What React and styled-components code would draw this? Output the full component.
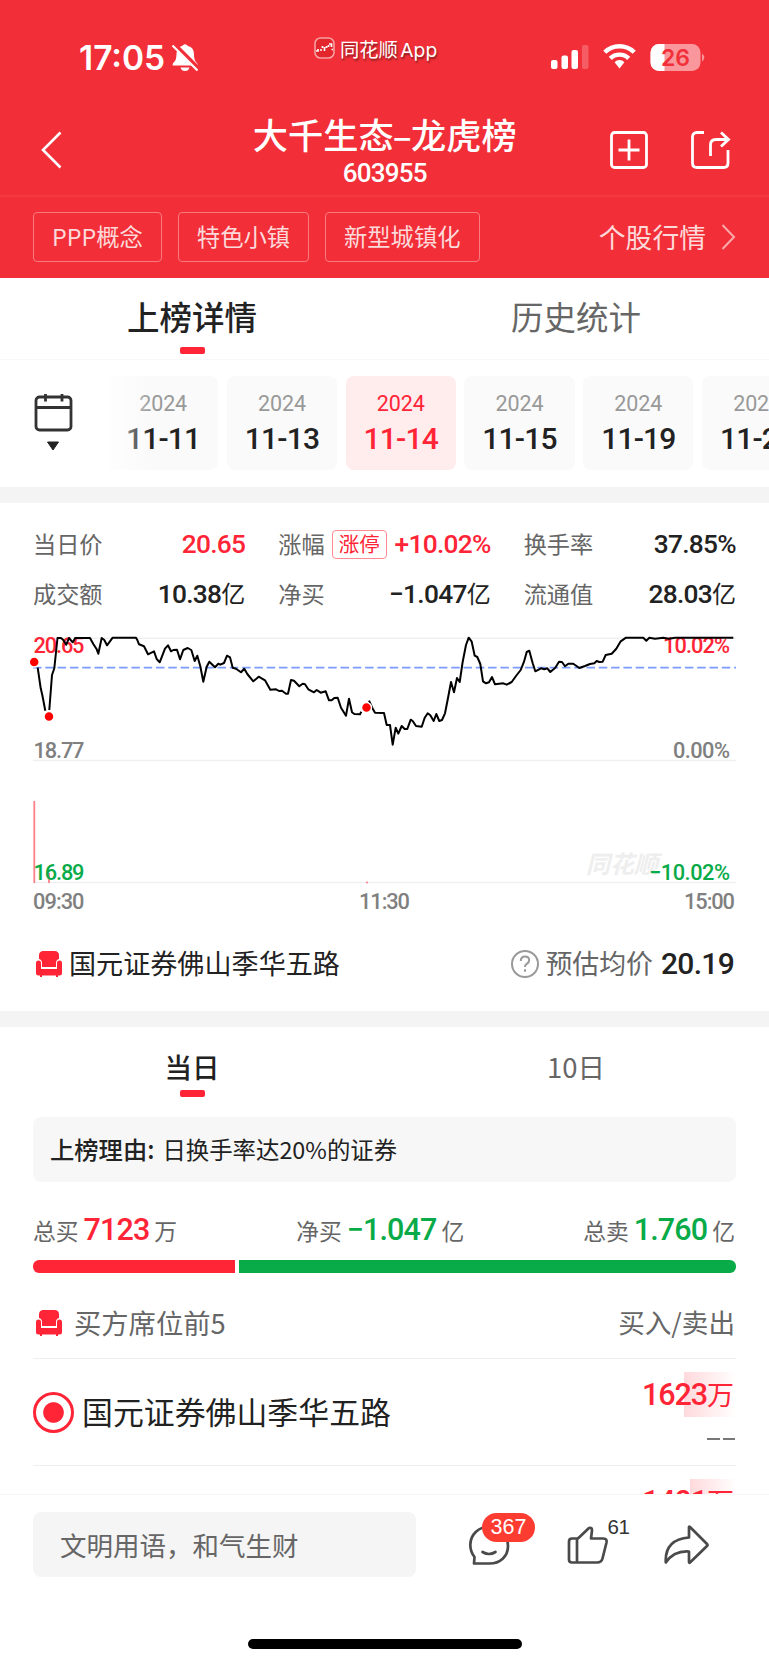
import React from 'react'
import styled, { createGlobalStyle } from 'styled-components'

const days = [
  { year: '2024', day: '11-11' },
  { year: '2024', day: '11-13' },
  { year: '2024', day: '11-14', active: true },
  { year: '2024', day: '11-15' },
  { year: '2024', day: '11-19' },
  { year: '2024', day: '11-20' },
]

const stats = [
  { label: '当日价', value: '20.65', red: true },
  { label: '涨幅', badge: '涨停', value: '+10.02%', red: true },
  { label: '换手率', value: '37.85%' },
  { label: '成交额', value: '10.38', unit: '亿' },
  { label: '净买', value: '−1.047', unit: '亿' },
  { label: '流通值', value: '28.03', unit: '亿' },
]

// price line, split where the trade dots sit on it
const priceLines = [
  '37.7,37.7 40.7,58.3 42.3,65 45.3,80.7',
  '49.3,80 52,45 54.3,38.3 57.5,8 61,8 63.3,10 66.3,14.7 69,8 72.7,12.3 75.3,8 90,8 93.3,14 96.7,19.3 98.3,23.7 101.7,8 104.3,10 107,15.3 112.7,7.7 136,7.7 137.3,10 139,14.3 144,16.3 148,24.3 154,21.3 156.7,29 159.7,32.3 165,18.7 168,15.3 171,21.3 173.3,20 177,19.7 180,29.3 183.3,20 187.7,18 191.3,20 194.7,31 197.3,25.7 200.3,36.3 203.3,51.7 206.7,36.7 209.3,31.7 215,37.3 218.3,33.7 220.3,34.7 224,33 227,25.7 230,27.3 232.7,37.7 236,38.7 241,42.3 244.3,38.7 247.3,44 253.3,51.3 258.7,46.7 265,50.3 270.3,59.7 276,59.3 279,61 282,60.7 286,63.7 288,63.7 291,50 294,50.7 299.3,56.3 302.7,53.7 305,54.3 308.3,59.3 314,62.3 316.7,60 320.7,62.7 325.7,61.3 329,70.3 331.7,70.3 334.3,68 337.7,67.7 341,77.7 346,85.7 349,68.7 352,82.3 354.3,84 360,84.3 361.3,81.7',
  '369,70.7 373,79.3 375,82.7 384,83 386.7,95 390,95 392.7,114.7 395.7,97.7 398.3,103.7 401.7,96 404.7,99 407.3,99 410.7,89.7 412.7,91 416,96 421.7,96.7 424.7,87.7 427.7,83.3 430.3,85.3 433.7,91 436.3,84 439.3,91 442,90 445,83.3 448,68 451,52 454,62.3 457,48 459.7,52 462.7,31.7 466,15 468.7,7.7 471.7,11.7 474.7,25.7 477.3,27 480.3,34 483,51.3 486,53.3 489,52.3 492,47 495,54.3 503.3,53.3 506.7,54.7 511.7,52 516,46 520.7,40 524,31.7 526.7,22 529.3,20.7 532.7,33.3 535.3,41.3 541,38.3 544.3,39.3 547.3,38.3 550.3,42 555.3,37.7 559,31.7 562,32 565,36.3 568.3,33.7 573.3,33.7 579.3,38 585,36 590,34 594.3,33.3 596.7,31 599.3,32 602.7,31.7 605.7,25 611.7,23.7 616.3,18.7 620.7,11.3 626,7.7 643.3,7.7 646.3,10.7 649.3,7.7 655,8.7 663.3,7.7 669,8.7 675,7.7 733.3,7.7',
]

const Chair = () => (
  <svg width="28" height="28" viewBox="0 0 28 28" fill="#ff2436">
    <path d="M4 9V5.5Q4 1 8.500 1h11Q24 1 24 5.500V9q-3 .8-3 4v4H7v-4q0-3.200-3-4z" />
    <path d="M3.500 10.500Q1 10.500 1 13v10q0 2.500 2.500 2.500H5V27h2v-1.500h14V27h2v-1.500h1.500Q27 25.500 27 23V13q0-2.500-2.500-2.500T22 13v6H6v-6q0-2.500-2.500-2.500z" />
  </svg>
)

const StatusIcons = () => (
  <svg width="156" height="30" viewBox="0 0 156 30">
    <g fill="#fff">
      <rect x="1" y="17" width="6.500" height="9" rx="2" />
      <rect x="11.500" y="12.500" width="6.500" height="13.500" rx="2" />
      <rect x="21.500" y="7" width="6.500" height="19" rx="2" />
      <rect x="32" y="2" width="6.500" height="24" rx="2" opacity=".22" />
      <path d="M64.600 19.200a6.600 6.600 0 0 1 9.800 0l-4.900 6.300z" />
    </g>
    <g fill="none" stroke="#fff" strokeWidth="4.400">
      <path d="M54.800 9.300a21 21 0 0 1 29.400 0" />
      <path d="M60.300 15.400a13 13 0 0 1 18.400 0" />
    </g>
    <rect x="100.500" y="1" width="50" height="27" rx="8.500" fill="#fff" opacity=".5" />
    <path d="M114.500 1H109a8.500 8.500 0 0 0-8.500 8.500v10a8.500 8.500 0 0 0 8.500 8.500h5.500z" fill="#fff" />
    <path d="M152 10.500q4.500 4 0 8z" fill="#fff" opacity=".5" />
    <text x="125.500" y="22.500" textAnchor="middle" fill="#f22f38" fontFamily="Inter" fontWeight="600" fontSize="23">26</text>
  </svg>
)

const App = () => {
  return (
    <Page>
      <Global />
      <Header>
        <StatusBar>
          <Clock>17:05</Clock>
          <Bell width="28" height="29" viewBox="0 0 28 29">
            <path d="M1.500 22.500q0-2.500 2-4 2-2 2-8Q6 3.500 11 3q3-3.500 6 0 6 1 6 8.500 0 5.500 2 7.500t2 3.500zM9.500 24.500h9q-1 3.500-4.500 3.500t-4.500-3.500z" fill="#fff" />
            <path d="M4 2.500 26 24.500" stroke="#f22f38" strokeWidth="5" />
            <path d="M1.500 2.500 26.500 27.500" stroke="#fff" strokeWidth="2.200" />
          </Bell>
          <Brand>
            <svg width="21" height="22" viewBox="0 0 21 22">
              <rect x="1" y="1" width="19" height="20" rx="5.500" fill="#e3262b" stroke="#f8a0a2" strokeWidth="1.600" />
              <path d="M2 14h2v-2M6 13h2M8.500 9v2M10.500 10v4M12.500 11V9M14.500 10V8M15 7h2.500v3M17.500 12.500H19" stroke="#fff" strokeWidth="1.700" fill="none" />
            </svg>
            同花顺 App
          </Brand>
          <StatusIcons />
        </StatusBar>
        <TitleBar>
          <svg width="22" height="38" viewBox="0 0 22 38" fill="none" stroke="#fff" strokeWidth="2.600">
            <path d="M20.500 1.500 3 19l17.500 17.500" />
          </svg>
          <TitleBox>
            <Title>大千生态<Dash>–</Dash>龙虎榜</Title>
            <Code>603955</Code>
          </TitleBox>
          <Actions>
            <svg width="38" height="38" viewBox="0 0 38 38" fill="none" stroke="#fff" strokeWidth="2.800">
              <rect x="1.500" y="1.500" width="35" height="35" rx="3" />
              <path d="M8.500 19h21M19 8.500v21" />
            </svg>
            <svg width="40" height="38" viewBox="0 0 40 38" fill="none" stroke="#fff" strokeWidth="2.800">
              <path d="M13 1.500H6Q1.500 1.500 1.500 6v26q0 4.500 4.500 4.500h26.500q4.500 0 4.500-4.500V19" />
              <path d="M19.500 25V14q0-5.500 5.500-5.500h11" />
              <path d="m30 1.500 7.500 7L30 15.500" />
            </svg>
          </Actions>
        </TitleBar>
        <TagBar>
          <Tag>PPP概念</Tag>
          <Tag>特色小镇</Tag>
          <Tag>新型城镇化</Tag>
          <Quote>
            个股行情
            <svg width="15" height="26" viewBox="0 0 15 26" fill="none" stroke="#f9a9ac" strokeWidth="2">
              <path d="M1.500 1 13 13 1.500 25" />
            </svg>
          </Quote>
        </TagBar>
      </Header>

      <Tabs $main>
        <Tab $main $on>上榜详情</Tab>
        <Tab $main>历史统计</Tab>
      </Tabs>

      <DateBar>
        <Calendar>
          <svg width="40" height="60" viewBox="0 0 40 60" fill="none" stroke="#333" strokeWidth="2.800">
            <rect x="3" y="5" width="35" height="33" rx="3.500" />
            <path d="M3 15.500h35M12.500 2v7.500M29 2v7.500" />
            <path d="M14.500 50h11L20 58z" fill="#222" stroke="#222" strokeWidth="1" />
          </svg>
        </Calendar>
        <DayList>
          {days.map((d) => (
            <Day key={d.day} $on={d.active}>
              <Year $on={d.active}>{d.year}</Year>
              <span>{d.day}</span>
            </Day>
          ))}
          <Fade />
        </DayList>
      </DateBar>
      <Gap />

      <Stats>
        {stats.map((s) => (
          <Stat key={s.label}>
            <StatLabel>{s.label}</StatLabel>
            {s.badge && <LimitBadge>{s.badge}</LimitBadge>}
            <StatValue $red={s.red}>{s.value}{s.unit && <small>{s.unit}</small>}</StatValue>
          </Stat>
        ))}
      </Stats>

      <Chart width="769" height="290" viewBox="0 0 769 290">
        <g stroke="#f0f0f0" strokeWidth="1.500">
          <path d="M33 8.200h703M33 130.500h703M33 252.500h703" />
        </g>
        <text className="mark" x="586" y="243">同花顺</text>
        <path d="M34.300 171v82M49 243v10" stroke="#ff7f88" strokeWidth="1.800" />
        <path d="M366 252.500h2" stroke="#ff7f88" strokeWidth="1.500" />
        <path d="M33 37.600h703" stroke="#7d9cff" strokeWidth="1.800" strokeDasharray="8.500 3.800" />
        <g fill="#ff2436">
          <text x="33.500" y="22.800" textLength="51">20.65</text>
          <text x="663" y="22.800" textLength="67">10.02%</text>
        </g>
        <g fill="#808080">
          <text x="33.500" y="128" textLength="51">18.77</text>
          <text x="673" y="128" textLength="57">0.00%</text>
          <text x="33" y="279" textLength="51.500">09:30</text>
          <text x="359" y="279" textLength="51">11:30</text>
          <text x="684" y="279" textLength="51">15:00</text>
        </g>
        <g fill="#09ab49">
          <text x="33.500" y="250" textLength="51">16.89</text>
          <text x="649" y="250" textLength="81">−10.02%</text>
        </g>
        {priceLines.map((p) => (
          <polyline key={p} points={p} fill="none" stroke="#000" strokeWidth="2" strokeLinejoin="round" />
        ))}
        <g fill="#f00" stroke="#fff" strokeWidth="1.500">
          <circle cx="34.200" cy="32" r="5" />
          <circle cx="49" cy="86.500" r="5" />
          <circle cx="366.500" cy="77.500" r="5" />
        </g>
      </Chart>

      <Broker>
        <Chair />
        <BrokerName>国元证券佛山季华五路</BrokerName>
        <svg width="30" height="30" viewBox="0 0 30 30" fill="none" stroke="#999" strokeWidth="2">
          <circle cx="15" cy="15" r="13" />
          <path d="M10.800 12q0-4.500 4.200-4.500t4.200 3.800q0 2-2.200 3.400-2 1.300-2 3.300M15 20.300v2.400" />
        </svg>
        <AvgLabel>预估均价</AvgLabel>
        <AvgValue>20.19</AvgValue>
      </Broker>
      <Gap />

      <Tabs>
        <Tab $on>当日</Tab>
        <Tab>10日</Tab>
      </Tabs>
      <Reason><b>上榜理由:</b>日换手率达20%的证券</Reason>
      <Totals>
        <Total>总买<Num $color="#ff2436">7123</Num>万</Total>
        <Total>净买<Num>−1.047</Num>亿</Total>
        <Total>总卖<Num>1.760</Num>亿</Total>
      </Totals>
      <Ratio>
        <Buy />
        <Sell />
      </Ratio>

      <SeatHead>
        <Chair />
        <SeatTitle>买方席位前5</SeatTitle>
        <SeatSides>买入/卖出</SeatSides>
      </SeatHead>
      <SeatList>
        <Seat>
          <Radio />
          <SeatName>国元证券佛山季华五路</SeatName>
          <Amounts>
            <Amount $from={42}>1623<small>万</small></Amount>
            <Empty><i /><i /></Empty>
          </Amounts>
        </Seat>
        <Seat>
          <Amounts>
            <Amount $from={48}>1401<small>万</small></Amount>
          </Amounts>
        </Seat>
      </SeatList>

      <Footer>
        <Comment>文明用语，和气生财</Comment>
        <IconBox>
          <svg width="44" height="44" viewBox="0 0 44 44" fill="none" stroke="#4a4a4a" strokeWidth="2.700" strokeLinejoin="round" strokeLinecap="round">
            <path d="M6 40.500h15.500C32 40.500 40 33.500 40 23S32 3.500 21.500 3.500 2.300 11.500 2.300 22q0 6.500 4.200 12z" />
            <path d="M14.500 29q6.500 4 13 0" />
          </svg>
          <Badge>367</Badge>
        </IconBox>
        <IconBox>
          <svg width="44" height="44" viewBox="0 0 44 44" fill="none" stroke="#4a4a4a" strokeWidth="2.700" strokeLinejoin="round">
            <path d="M11 15.500H6q-3 0-3 3v18q0 3 3 3h25q4.500 0 5.500-4l4-16q.8-4-3-4H25l1-8q0-3.500-3-2.500L12.500 15q-.8.500-1.500.5v24" />
          </svg>
          <Likes>61</Likes>
        </IconBox>
        <IconBox>
          <svg width="46" height="44" viewBox="0 0 46 44" fill="none" stroke="#4a4a4a" strokeWidth="2.700" strokeLinejoin="round">
            <path d="M26 4.500q-.2-1.500 1-.5l17 17q1 1 0 2L27 39.500q-1 .8-1-.7V28.500Q11 27.500 2.800 39.500 1.500 16.500 26 14.500z" />
          </svg>
        </IconBox>
      </Footer>
      <HomeBar />
    </Page>
  )
}

export default App

const Global = createGlobalStyle`
  body {
    margin: 0;
    background: #fff;
  }
  * {
    box-sizing: border-box;
  }
  svg {
    flex: none;
    display: block;
  }
`

const Page = styled.div`
  width: 769px;
  height: 1665px;
  overflow: hidden;
  display: flex;
  flex-direction: column;
  color: #222;
  background: #fff;
  font-family: Roboto, "Noto Sans CJK SC", sans-serif;
  white-space: nowrap;
`

const Header = styled.div`
  height: 278px;
  flex: none;
  background: #f22f38;
  color: #fff;
`

const StatusBar = styled.div`
  height: 104px;
  padding: 43px 0 0 79px;
  display: flex;
  align-items: flex-start;
`

const Clock = styled.div`
  width: 92px;
  font: 600 33.500px/30px Inter, sans-serif;
  letter-spacing: 0;
`

const Bell = styled.svg`
  margin-right: 115px;
`

const Brand = styled.div`
  display: flex;
  gap: 5px;
  width: 236px;
  height: 22px;
  margin-top: -6px;
  font-size: 19.300px;
  font-family: Inter, "Noto Sans CJK SC", sans-serif;
  line-height: 26px;
  word-spacing: -3px;
  text-shadow: 1px 2px 2px rgba(0, 0, 0, 0.45);
`

const TitleBar = styled.div`
  height: 93px;
  padding: 0 38px 0 40px;
  display: flex;
  justify-content: space-between;
  align-items: center;
  border-bottom: 2px solid #f23940;
`

const TitleBox = styled.div`
  display: flex;
  flex-direction: column;
  align-items: center;
  padding: 4px 0 0 98px;
`

const Title = styled.div`
  display: flex;
  font-family: "Noto Sans CJK SC", sans-serif;
  font-size: 35.200px;
  font-weight: 500;
  line-height: 40px;
`

const Dash = styled.span`
  width: 17.500px;
  display: flex;
  justify-content: center;
`

const Code = styled.div`
  margin-top: 3px;
  font-size: 26px;
  font-weight: 500;
  line-height: 33px;
  letter-spacing: -0.800px;
`

const Actions = styled.div`
  display: flex;
  gap: 43.500px;
`

const TagBar = styled.div`
  height: 79px;
  padding: 0 33px;
  display: flex;
  align-items: center;
`

const Tag = styled.div`
  height: 50px;
  padding: 0 18px;
  margin-right: 16px;
  border: 1.500px solid #f77a80;
  border-radius: 4px;
  color: #fdd9da;
  font: 23.300px/47px "Noto Sans CJK SC", sans-serif;
`

const Quote = styled.div`
  margin-left: auto;
  display: flex;
  align-items: center;
  gap: 15px;
  color: #fdd9da;
  font: 26.800px/40px "Noto Sans CJK SC", sans-serif;
`

const Tabs = styled.div`
  flex: none;
  display: flex;
  height: ${(p) => (p.$main ? 82 : 90)}px;
  padding-right: 1px;
  border-bottom: ${(p) => (p.$main ? '1px solid #f8f8f8' : 'none')};
`

const Tab = styled.div`
  flex: 1;
  display: flex;
  flex-direction: column;
  align-items: center;
  padding-top: ${(p) => (p.$main ? 17 : 18)}px;
  font-family: "Noto Sans CJK SC", sans-serif;
  font-size: ${(p) => (p.$main ? 32.500 : 27.500)}px;
  line-height: 42px;
  font-weight: ${(p) => (p.$on ? 500 : 400)};
  color: ${(p) => (p.$on ? '#222' : '#666')};

  &::after {
    content: '';
    width: 25px;
    height: 6.500px;
    margin-top: ${(p) => (p.$main ? 10 : 3)}px;
    border-radius: 2px;
    background: ${(p) => (p.$on ? '#ff2436' : 'transparent')};
  }
`

const DateBar = styled.div`
  flex: none;
  height: 127px;
  display: flex;
  padding-top: 16px;
`

const Calendar = styled.div`
  width: 108px;
  padding: 16px 0 0 33px;
  flex: none;
`

const DayList = styled.div`
  position: relative;
  flex: 1;
  display: flex;
  gap: 8.500px;
  overflow: hidden;
`

const Day = styled.div`
  flex: none;
  width: 110.300px;
  height: 94px;
  padding-top: 11px;
  border-radius: 8px;
  display: flex;
  flex-direction: column;
  align-items: center;
  background: ${(p) => (p.$on ? '#ffedee' : '#fafafa')};
  color: ${(p) => (p.$on ? '#ff2436' : '#222')};
  font-size: 30px;
  line-height: 38px;
  font-weight: 500;
  letter-spacing: -0.800px;
`

const Year = styled.div`
  color: ${(p) => (p.$on ? '#ff2436' : '#999')};
  font-size: 21.500px;
  line-height: 33px;
  font-weight: 400;
  letter-spacing: -0.100px;
`

const Fade = styled.div`
  position: absolute;
  left: 0;
  top: 0;
  width: 44px;
  height: 94px;
  background: linear-gradient(90deg, rgba(255, 255, 255, 0.8), rgba(255, 255, 255, 0));
`

const Gap = styled.div`
  flex: none;
  height: 16px;
  background: #f4f4f4;
`

const Stats = styled.div`
  flex: none;
  height: 127px;
  padding: 16px 33px 0 33px;
  display: grid;
  grid-template-columns: repeat(3, 1fr);
  grid-auto-rows: 50px;
  column-gap: 33px;
`

const Stat = styled.div`
  display: flex;
  align-items: center;
`

const StatLabel = styled.div`
  padding-bottom: 2px;
  color: #666;
  font: 23.200px/30px "Noto Sans CJK SC", sans-serif;
`

const LimitBadge = styled.div`
  margin-left: 7px;
  height: 29px;
  padding: 0 6px;
  border: 1.500px solid #ff8a93;
  border-radius: 4px;
  color: #ff2436;
  font: 20.500px/25px "Noto Sans CJK SC", sans-serif;
`

const StatValue = styled.div`
  margin-left: auto;
  color: ${(p) => (p.$red ? '#ff2436' : '#222')};
  font-size: 26.300px;
  line-height: 30px;
  font-weight: 500;
  letter-spacing: -0.700px;

  small {
    font-size: 24px;
    font-weight: 400;
    letter-spacing: 0;
  }
`

const Chart = styled.svg`
  font-size: 21.800px;
  font-weight: 500;

  .mark {
    fill: #eee;
    font-size: 24px;
    font-weight: 700;
    font-style: italic;
  }
`

const Broker = styled.div`
  flex: none;
  height: 91px;
  padding: 0 35px 4px 35px;
  display: flex;
  align-items: center;
`

const BrokerName = styled.div`
  flex: 1;
  margin-left: 6px;
  padding-bottom: 1px;
  font: 27.100px/40px "Noto Sans CJK SC", sans-serif;
`

const AvgLabel = styled.div`
  margin: 0 8px 0 5px;
  padding-bottom: 1px;
  color: #666;
  font: 26.900px/40px "Noto Sans CJK SC", sans-serif;
`

const AvgValue = styled.div`
  font-size: 30px;
  font-weight: 500;
  letter-spacing: -0.700px;
`

const Reason = styled.div`
  flex: none;
  height: 65px;
  margin: 0 33px;
  padding-left: 17px;
  border-radius: 8px;
  background: #f7f7f7;
  font: 23.400px/64px "Noto Sans CJK SC", sans-serif;

  b {
    margin-right: 8px;
    font-size: 24.300px;
    font-weight: 500;
  }
`

const Totals = styled.div`
  flex: none;
  height: 78px;
  padding: 20px 34px 0 33px;
  display: flex;
  justify-content: space-between;
`

const Total = styled.div`
  display: flex;
  align-items: baseline;
  color: #666;
  font: 22.800px/56px "Noto Sans CJK SC", sans-serif;
`

const Num = styled.span`
  margin: 0 5px;
  color: ${(p) => p.$color || '#09ab49'};
  font: 500 30.500px/56px Roboto, sans-serif;
  letter-spacing: -0.900px;
`

const Ratio = styled.div`
  flex: none;
  height: 12.500px;
  margin: 0 33px;
  display: flex;
  gap: 4px;
`

const Buy = styled.div`
  flex: 202;
  background: #ff2436;
  border-radius: 6px 0 0 6px;
`

const Sell = styled.div`
  flex: 497;
  background: #09ab49;
  border-radius: 0 6px 6px 0;
`

const SeatHead = styled.div`
  flex: none;
  height: 86px;
  margin: 0 33px;
  padding: 15px 1px 0 2px;
  display: flex;
  align-items: center;
  border-bottom: 1.500px solid #eee;
  color: #666;
  font: 27.300px/40px "Noto Sans CJK SC", sans-serif;
`

const SeatTitle = styled.div`
  flex: 1;
  margin-left: 11px;
  padding-bottom: 1px;
`

const SeatSides = styled.div`
  padding-bottom: 1px;
  font-size: 26.600px;
`

const SeatList = styled.div`
  flex: none;
  height: 135px;
  overflow: hidden;
`

const Seat = styled.div`
  height: 107px;
  margin: 0 33px;
  display: flex;
  align-items: center;
  border-bottom: 1.500px solid #eee;
`

const Radio = styled.div`
  width: 41px;
  height: 41px;
  margin-top: 2px;
  border: 3px solid #ff2436;
  border-radius: 50%;
  background: radial-gradient(circle, #ff2436 9.800px, #fff 10.800px);
`

const SeatName = styled.div`
  margin-left: 8px;
  padding-bottom: 2px;
  font: 30.900px/44px "Noto Sans CJK SC", sans-serif;
`

const Amounts = styled.div`
  margin-left: auto;
  align-self: flex-start;
  padding-top: 13px;
`

const Amount = styled.div`
  height: 45px;
  padding-right: 2px;
  border-radius: 3px;
  color: #ff2436;
  font-size: 30.500px;
  line-height: 46px;
  font-weight: 500;
  letter-spacing: -1.100px;
  background: linear-gradient(90deg, #ffd9dc, #fff) right / calc(100% - ${(p) => p.$from}px) 100% no-repeat;

  small {
    font-size: 27px;
    font-weight: 400;
    letter-spacing: 0;
  }
`

const Empty = styled.div`
  display: flex;
  justify-content: flex-end;
  gap: 3px;
  margin-top: 21px;
  padding-right: 1px;

  i {
    width: 12.500px;
    height: 2.500px;
    background: #777;
  }
`

const Footer = styled.div`
  flex: none;
  height: 140px;
  padding: 17px 0 0 33px;
  display: flex;
  align-items: flex-start;
  border-top: 1.500px solid #f6f6f6;
`

const Comment = styled.div`
  flex: none;
  width: 383px;
  height: 65px;
  margin-right: 52px;
  padding-left: 27px;
  border-radius: 8px;
  background: #f5f5f5;
  color: #666;
  font: 26.500px/65px "Noto Sans CJK SC", sans-serif;
`

const IconBox = styled.div`
  position: relative;
  flex: none;
  width: 97.500px;
  padding-top: 11px;
`

const Badge = styled.div`
  position: absolute;
  left: 14px;
  top: 1px;
  width: 53px;
  height: 29px;
  border-radius: 15px;
  background: #fc3b31;
  color: #fff;
  font: 21.500px/29px "Liberation Sans", sans-serif;
  text-align: center;
`

const Likes = styled.div`
  position: absolute;
  left: 42px;
  top: 3px;
  color: #333;
  font: 20.500px/24px "Liberation Sans", sans-serif;
  letter-spacing: -0.500px;
`

const HomeBar = styled.div`
  flex: none;
  width: 274px;
  height: 10px;
  margin: 5px auto 0;
  border-radius: 5px;
  background: #000;
`
